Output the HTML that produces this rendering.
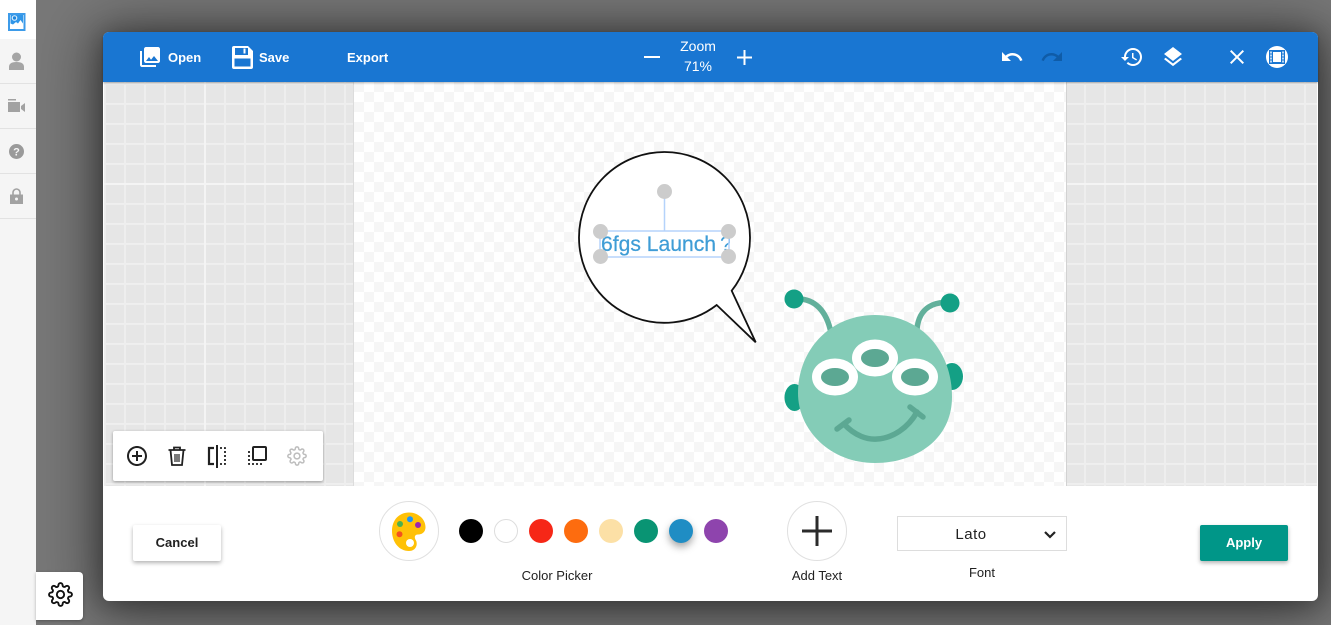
<!DOCTYPE html>
<html><head><meta charset="utf-8"><style>
*{box-sizing:border-box}
html,body{margin:0;padding:0;width:1331px;height:625px;overflow:hidden;background:#787878;font-family:"Liberation Sans",sans-serif;color:#212121}
.a{position:absolute}
.side{left:0;top:0;width:36px;height:625px;background:#f5f5f5}
.side i{position:absolute;left:0;width:36px;height:1px;background:#e2e2e2}
.modal{left:103px;top:32px;width:1215px;height:569px;border-radius:6px;background:#fff;box-shadow:0 4px 60px 6px rgba(0,0,0,.5),0 3px 24px 2px rgba(0,0,0,.28)}
.head{left:103px;top:32px;width:1215px;height:50px;background:#1976d2;border-radius:6px 6px 0 0;box-shadow:0 1px 2px rgba(0,0,0,.3)}
.t{position:absolute;font-size:14px;line-height:16px;white-space:nowrap}
.w{color:#fff;font-weight:bold;font-size:13px}
.c{transform:translateX(-50%)}
.grid{background-color:#e6e6e6;background-image:linear-gradient(90deg,#ececec 0,#f1f1f1 1px,#ebebeb 2px,transparent 2px),linear-gradient(#ececec 0,#f1f1f1 1px,#ebebeb 2px,transparent 2px);background-size:20px 20px}
.check{left:354px;top:82px;width:712px;height:404px;background-color:#fff;background-image:conic-gradient(#f6f6f6 25%,#fff 25% 50%,#f6f6f6 50% 75%,#fff 75%);background-size:20px 20px;background-position:10px 0}
.btn{top:525px;width:88px;height:36px;border-radius:2px;text-align:center;line-height:36px;font-size:13px;font-weight:bold;box-shadow:0 2px 4px rgba(0,0,0,.3)}
.sw{top:519px;width:24px;height:24px;border-radius:50%}
.circ{top:501px;width:60px;height:60px;border-radius:50%;border:1px solid #e0e0e0;background:#fff}
</style></head><body>

<div class="a modal"></div>

<div class="a side">
  <div class="a" style="left:0;top:0;width:36px;height:39px;background:#fff"></div>
  <i style="top:83px"></i><i style="top:128px"></i><i style="top:173px"></i><i style="top:218px"></i>
  <svg class="a" style="left:7px;top:12px" width="20" height="20" viewBox="0 0 20 20"><rect x="1" y="1" width="17.500" height="18" fill="#3d9be9"/><rect x="3" y="3" width="13.500" height="14" fill="#fff"/><rect x="3.500" y="3" width="12.500" height="11.500" fill="#3096e8"/><circle cx="7.500" cy="6" r="2.800" fill="#e4f2fd"/><circle cx="7.500" cy="6" r="1.700" fill="#1f86dc"/><path d="M3.500 14.500v-3l2.500 1 3-2.500 2 1.500 2.500-3.500 2.500 3.500v3z" fill="#fff"/></svg>
  <svg class="a" style="left:8px;top:52px" width="17" height="18" viewBox="0 0 17 18" fill="#a5a5a5"><circle cx="8.500" cy="5" r="4.500"/><path d="M1 18v-3c0-3 2-5 7.500-5S16 12 16 15v3z"/></svg>
  <svg class="a" style="left:7px;top:99px" width="19" height="14" viewBox="0 0 19 14" fill="#a2a2a2"><rect x="1" y="0" width="8" height="1.500"/><rect x="1" y="3" width="12" height="10"/><path d="M14 7l4-3v9l-4-3z"/></svg>
  <svg class="a" style="left:9px;top:144px" width="15" height="15" viewBox="0 0 15 15"><circle cx="7.500" cy="7.500" r="7.500" fill="#9a9a9a"/><text x="7.500" y="11.500" text-anchor="middle" font-family="Liberation Sans" font-weight="bold" font-size="11" fill="#f5f5f5">?</text></svg>
  <svg class="a" style="left:10px;top:188px" width="13" height="16" viewBox="0 0 13 16"><path d="M3 7V4.500a3.500 3.500 0 0 1 7 0V7" fill="none" stroke="#a2a2a2" stroke-width="1.600"/><rect y="6.500" width="13" height="9.500" fill="#a2a2a2"/><circle cx="6.500" cy="11" r="1.500" fill="#f5f5f5"/></svg>
</div>

<div class="a grid" style="left:104px;top:82px;width:250px;height:404px;background-position:20px 21px"></div>
<div class="a" style="left:204px;top:82px;width:2px;height:404px;background:#f4f4f4"></div>
<div class="a" style="left:104px;top:183px;width:250px;height:2px;background:#f4f4f4"></div>
<div class="a grid" style="left:1066px;top:82px;width:251px;height:404px;background-position:18px 21px"></div>
<div class="a" style="left:1066px;top:183px;width:251px;height:2px;background:#f4f4f4"></div>
<div class="a check"></div>
<div class="a" style="left:353px;top:82px;width:1px;height:404px;background:#dcdcdc"></div>
<div class="a" style="left:1066px;top:82px;width:1px;height:404px;background:#d2d2d2"></div>

<div class="a head"></div>
<svg class="a" style="left:138px;top:45px" width="24" height="24" viewBox="0 0 24 24" fill="#fff"><path d="M22 16V4c0-1.100-.9-2-2-2H8c-1.100 0-2 .9-2 2v12c0 1.100.9 2 2 2h12c1.100 0 2-.9 2-2zm-11-4l2.030 2.710L16 11l4 5H8l3-4zM2 6v14c0 1.100.9 2 2 2h14v-2H4V6H2z"/></svg>
<div class="t w" style="left:168px;top:50px">Open</div>
<svg class="a" style="left:232px;top:46px" width="21" height="23" viewBox="0 0 21 23"><path d="M2 0h14l5 5v16a2 2 0 0 1-2 2H2a2 2 0 0 1-2-2V2a2 2 0 0 1 2-2z" fill="#fff"/><rect x="3" y="2" width="13" height="7" fill="#1976d2"/><rect x="11.500" y="2.500" width="2" height="5" fill="#fff"/><rect x="2.500" y="12.500" width="16" height="8" fill="#1976d2"/></svg>
<div class="t w" style="left:259px;top:50px">Save</div>
<div class="t w" style="left:347px;top:50px">Export</div>

<svg class="a" style="left:644px;top:56px" width="16" height="3"><rect width="16" height="2" fill="#fff"/></svg>
<div class="t c" style="left:698px;top:38px;color:#fff">Zoom</div>
<div class="t c" style="left:698px;top:58px;color:#fff">71%</div>
<svg class="a" style="left:737px;top:50px" width="15" height="15"><rect y="6.500" width="15" height="2" fill="#fff"/><rect x="6.500" width="2" height="15" fill="#fff"/></svg>

<svg class="a" style="left:1000px;top:45px" width="24" height="24" viewBox="0 0 24 24" fill="#fff"><path d="M12.500 8c-2.650 0-5.050.99-6.900 2.600L2 7v9h9l-3.620-3.620c1.390-1.160 3.160-1.880 5.120-1.880 3.540 0 6.550 2.310 7.600 5.500l2.370-.78C21.080 11.030 17.150 8 12.500 8z"/></svg>
<svg class="a" style="left:1040px;top:45px" width="24" height="24" viewBox="0 0 24 24" fill="#0f5ca8"><path d="M18.400 10.600C16.550 8.990 14.150 8 11.500 8c-4.650 0-8.580 3.030-9.960 7.220L3.900 16c1.050-3.190 4.050-5.500 7.600-5.500 1.950 0 3.730.72 5.120 1.880L13 16h9V7l-3.600 3.600z"/></svg>
<svg class="a" style="left:1120px;top:45px" width="24" height="24" viewBox="0 0 24 24" fill="#fff"><path d="M13 3c-4.970 0-9 4.030-9 9H1l3.890 3.890.07.14L9 12H6c0-3.870 3.130-7 7-7s7 3.130 7 7-3.130 7-7 7c-1.930 0-3.680-.79-4.940-2.060l-1.420 1.420C8.270 19.990 10.510 21 13 21c4.970 0 9-4.030 9-9s-4.030-9-9-9zm-1 5v5l4.280 2.540.72-1.210-3.500-2.080V8H12z"/></svg>
<svg class="a" style="left:1161px;top:45px" width="24" height="24" viewBox="0 0 24 24" fill="#fff"><path d="M11.990 18.540l-7.370-5.730L3 14.070l9 7 9-7-1.630-1.270-7.380 5.740zM12 16l7.360-5.730L21 9l-9-7-9 7 1.630 1.270L12 16z"/></svg>
<svg class="a" style="left:1225px;top:45px" width="24" height="24" viewBox="0 0 24 24" fill="#fff"><path d="M19 6.410L17.590 5 12 10.590 6.410 5 5 6.410 10.590 12 5 17.590 6.410 19 12 13.410 17.590 19 19 17.590 13.410 12z"/></svg>
<svg class="a" style="left:1266px;top:46px" width="22" height="22" viewBox="0 0 22 22"><circle cx="11" cy="11" r="11" fill="#fff"/><rect x="3" y="4" width="16" height="14" fill="#1976d2"/><rect x="7" y="6" width="8" height="10" fill="#fff"/><g fill="#bcd8f4"><rect x="4" y="5.500" width="2" height="2"/><rect x="4" y="8.500" width="2" height="2"/><rect x="4" y="11.500" width="2" height="2"/><rect x="4" y="14.500" width="2" height="2"/><rect x="16" y="5.500" width="2" height="2"/><rect x="16" y="8.500" width="2" height="2"/><rect x="16" y="11.500" width="2" height="2"/><rect x="16" y="14.500" width="2" height="2"/></g></svg>

<svg class="a" style="left:354px;top:82px" width="712" height="404" viewBox="354 82 712 404">
  <defs><clipPath id="qc"><rect x="721" y="236" width="9" height="18"/></clipPath></defs>
  <path d="M716.700 305A85.500 85.500 0 0 1 579 237.500A85.500 85.500 0 0 1 750 237.500A85.500 85.500 0 0 1 731.700 290.700L755.700 342.300Z" fill="#fff" stroke="#111" stroke-width="1.800" stroke-linejoin="miter"/>
  <text x="601" y="251" font-family="Liberation Sans" font-size="21" fill="#3f9dd6" stroke="#3f9dd6" stroke-width=".25" textLength="115" lengthAdjust="spacingAndGlyphs">6fgs Launch</text>
  <text x="720" y="251" font-family="Liberation Sans" font-size="21" fill="#3f9dd6" clip-path="url(#qc)">?</text>
  <rect x="600" y="231" width="129" height="26" fill="none" stroke="#b5d3fb" stroke-width="1.500"/>
  <path d="M664.500 198V231" stroke="#b5d3fb" stroke-width="1.500"/>
  <g fill="#cccccc"><circle cx="664.500" cy="191.500" r="7.500"/><circle cx="600.500" cy="231.500" r="7.500"/><circle cx="728.500" cy="231.500" r="7.500"/><circle cx="600.500" cy="256.500" r="7.500"/><circle cx="728.500" cy="256.500" r="7.500"/></g>

  <path d="M794 299C815 297 827 312 831 333" fill="none" stroke="#62b09b" stroke-width="5.500"/>
  <path d="M950 303C935 301 919 307 917 329" fill="none" stroke="#62b09b" stroke-width="5.500"/>
  <circle cx="794" cy="299" r="9.500" fill="#14a085"/><circle cx="950" cy="303" r="9.500" fill="#14a085"/>
  <ellipse cx="794.500" cy="397.500" rx="10" ry="13.500" fill="#14a085"/>
  <ellipse cx="952" cy="376.500" rx="11" ry="13.500" fill="#14a085"/>
  <path d="M875 315C920 315 952 350 952 397C952 440 915 463 875 463C830 463 798 430 798 393C798 350 830 315 875 315Z" fill="#84ccb7"/>
  <g fill="#fff"><ellipse cx="835" cy="377" rx="23" ry="18.500"/><ellipse cx="875" cy="358" rx="23" ry="18.500"/><ellipse cx="915" cy="377" rx="23" ry="18.500"/></g>
  <g fill="#5ca893"><ellipse cx="835" cy="377" rx="14" ry="9"/><ellipse cx="875" cy="358" rx="14" ry="9"/><ellipse cx="915" cy="377" rx="14" ry="9"/></g>
  <g fill="none" stroke="#5ca893" stroke-width="5.500" stroke-linecap="round"><path d="M844 424C855 436 868 440 877 439C893 438 908 428 917 412"/><path d="M837 429L849 420"/><path d="M910 407L923 417"/></g>
</svg>

<div class="a" style="left:113px;top:431px;width:210px;height:50px;background:#fff;border-radius:2px;box-shadow:0 1px 3px rgba(0,0,0,.35)"></div>
<svg class="a" style="left:125px;top:444px" width="24" height="24" viewBox="0 0 24 24" fill="#212121"><path d="M13 7h-2v4H7v2h4v4h2v-4h4v-2h-4V7zm-1-5C6.480 2 2 6.480 2 12s4.480 10 10 10 10-4.480 10-10S17.520 2 12 2zm0 18c-4.410 0-8-3.590-8-8s3.590-8 8-8 8 3.590 8 8-3.590 8-8 8z"/></svg>
<svg class="a" style="left:165px;top:444px" width="24" height="24" viewBox="0 0 24 24" fill="none" stroke="#212121" stroke-width="1.800"><path d="M3.500 6h17M9 5.500V3.500h6v2M5.500 6l1.500 15h10l1.500-15"/><path d="M10 10v8M12 10v8M14 10v8" stroke-width="1.200"/></svg>
<svg class="a" style="left:205px;top:444px" width="24" height="24" viewBox="0 0 24 24" fill="none" stroke="#212121" stroke-width="2.200"><path d="M9 4H4v16h5"/><path d="M12 1v23" stroke-width="2"/><path d="M15 4h5v16h-5" stroke-dasharray="2 2" stroke-width="1.800"/></svg>
<svg class="a" style="left:245px;top:444px" width="24" height="24" viewBox="0 0 24 24" fill="none" stroke="#212121"><rect x="8" y="3" width="13" height="13" rx="1" stroke-width="2"/><path d="M4 7v13h14" stroke-dasharray="2 2" stroke-width="1.800"/></svg>
<svg class="a" style="left:287px;top:446px" width="20" height="20" viewBox="0 0 24 24" fill="none" stroke="#bdbdbd" stroke-width="1.800"><circle cx="12" cy="12" r="3.500"/><path d="M19.400 15a1.650 1.650 0 0 0 .33 1.820l.06.06a2 2 0 0 1 0 2.830 2 2 0 0 1-2.830 0l-.06-.06a1.650 1.650 0 0 0-1.820-.33 1.650 1.650 0 0 0-1 1.510V21a2 2 0 0 1-2 2 2 2 0 0 1-2-2v-.09A1.650 1.650 0 0 0 9 19.400a1.650 1.650 0 0 0-1.820.33l-.06.06a2 2 0 0 1-2.830 0 2 2 0 0 1 0-2.830l.06-.06a1.650 1.650 0 0 0 .33-1.820 1.650 1.650 0 0 0-1.510-1H3a2 2 0 0 1-2-2 2 2 0 0 1 2-2h.09A1.650 1.650 0 0 0 4.600 9a1.650 1.650 0 0 0-.33-1.820l-.06-.06a2 2 0 0 1 0-2.830 2 2 0 0 1 2.830 0l.06.06a1.650 1.650 0 0 0 1.820.33H9a1.650 1.650 0 0 0 1-1.510V3a2 2 0 0 1 2-2 2 2 0 0 1 2 2v.09a1.650 1.650 0 0 0 1 1.510 1.650 1.650 0 0 0 1.820-.33l.06-.06a2 2 0 0 1 2.830 0 2 2 0 0 1 0 2.830l-.06.06a1.650 1.650 0 0 0-.33 1.820V9a1.650 1.650 0 0 0 1.510 1H21a2 2 0 0 1 2 2 2 2 0 0 1-2 2h-.09a1.650 1.650 0 0 0-1.510 1z"/></svg>

<div class="a btn" style="left:133px;background:#fff;color:#212121">Cancel</div>
<div class="a btn" style="left:1200px;background:#009688;color:#fff">Apply</div>

<div class="a circ" style="left:379px"></div>
<svg class="a" style="left:385px;top:507px" width="50" height="50" viewBox="0 0 50 50"><path d="M24 5.500C33 5.500 40.500 12 40.500 20C40.500 26 36 27.500 33 27.500C29.500 27.500 29 30.500 31 33.500C33 37.500 31 44 24 44C14 44 7 35 7 24C7 13 14 5.500 24 5.500Z" fill="#ffc107"/><circle cx="25" cy="12.300" r="3" fill="#2196f3"/><circle cx="15" cy="17" r="3" fill="#4caf50"/><circle cx="33" cy="18" r="3" fill="#9c27b0"/><circle cx="14.500" cy="27.300" r="3" fill="#f4511e"/><circle cx="25" cy="36" r="4" fill="#fff"/></svg>

<div class="a sw" style="left:459px;background:#000"></div>
<div class="a sw" style="left:494px;background:#fff;border:1px solid #ddd"></div>
<div class="a sw" style="left:529px;background:#f62717"></div>
<div class="a sw" style="left:564px;background:#fd6c0f"></div>
<div class="a sw" style="left:599px;background:#fce0a6"></div>
<div class="a sw" style="left:634px;background:#099473"></div>
<div class="a sw" style="left:669px;background:#1f8dc4;box-shadow:0 4px 8px rgba(0,0,0,.35)"></div>
<div class="a sw" style="left:704px;background:#8e44ad"></div>
<div class="t c" style="left:557px;top:568px;font-size:13px">Color Picker</div>

<div class="a circ" style="left:787px"></div>
<svg class="a" style="left:802px;top:516px" width="30" height="30"><rect y="13.500" width="30" height="3" fill="#2b2b2b"/><rect x="13.500" width="3" height="30" fill="#2b2b2b"/></svg>
<div class="t c" style="left:817px;top:568px;font-size:13px">Add Text</div>

<div class="a" style="left:897px;top:516px;width:170px;height:35px;border:1px solid #ddd;background:#fff"></div>
<div class="t c" style="left:971px;top:527px;font-size:15px;letter-spacing:.5px">Lato</div>
<svg class="a" style="left:1043px;top:530px" width="14" height="9"><path d="M2 2l5 5 5-5" fill="none" stroke="#222" stroke-width="2.200"/></svg>
<div class="t c" style="left:982px;top:565px;font-size:13px">Font</div>

<div class="a" style="left:36px;top:572px;width:47px;height:48px;background:#fff;border-radius:0 4px 4px 0;box-shadow:0 1px 3px rgba(0,0,0,.3)"></div>
<svg class="a" style="left:48px;top:582px" width="25" height="25" viewBox="0 0 24 24" fill="none" stroke="#111" stroke-width="1.800"><circle cx="12" cy="12" r="3.500"/><path d="M19.400 15a1.650 1.650 0 0 0 .33 1.820l.06.06a2 2 0 0 1 0 2.830 2 2 0 0 1-2.830 0l-.06-.06a1.650 1.650 0 0 0-1.820-.33 1.650 1.650 0 0 0-1 1.510V21a2 2 0 0 1-2 2 2 2 0 0 1-2-2v-.09A1.650 1.650 0 0 0 9 19.400a1.650 1.650 0 0 0-1.820.33l-.06.06a2 2 0 0 1-2.830 0 2 2 0 0 1 0-2.830l.06-.06a1.650 1.650 0 0 0 .33-1.820 1.650 1.650 0 0 0-1.510-1H3a2 2 0 0 1-2-2 2 2 0 0 1 2-2h.09A1.650 1.650 0 0 0 4.600 9a1.650 1.650 0 0 0-.33-1.820l-.06-.06a2 2 0 0 1 0-2.830 2 2 0 0 1 2.830 0l.06.06a1.650 1.650 0 0 0 1.820.33H9a1.650 1.650 0 0 0 1-1.510V3a2 2 0 0 1 2-2 2 2 0 0 1 2 2v.09a1.650 1.650 0 0 0 1 1.510 1.650 1.650 0 0 0 1.820-.33l.06-.06a2 2 0 0 1 2.830 0 2 2 0 0 1 0 2.830l-.06.06a1.650 1.650 0 0 0-.33 1.820V9a1.650 1.650 0 0 0 1.510 1H21a2 2 0 0 1 2 2 2 2 0 0 1-2 2h-.09a1.650 1.650 0 0 0-1.510 1z"/></svg>
</body></html>
